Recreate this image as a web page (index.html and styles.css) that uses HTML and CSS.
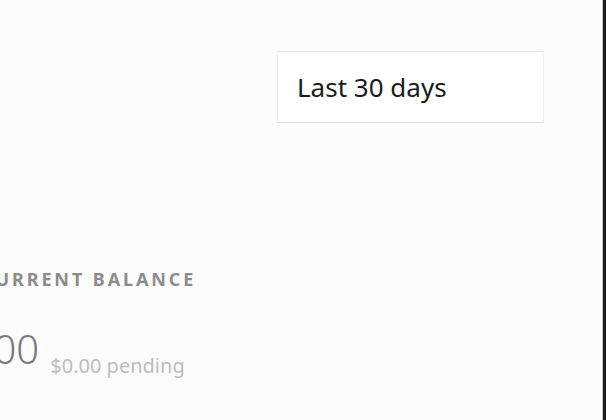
FILE: index.html
```html
<!DOCTYPE html>
<html lang="en">
<head>
<meta charset="utf-8">
<title>Balance</title>
<link rel="stylesheet" href="styles.css">
</head>
<body>
<div class="frame">
  <main class="main">
    <div class="toolbar">
      <div class="select">Last 30 days</div>
    </div>
    <section class="balance">
      <div class="label">CURRENT BALANCE</div>
      <div class="amount-row">
        <span class="amount">$0.00</span>
        <span class="pending">$0.00 pending</span>
      </div>
    </section>
  </main>
  <div class="edge"></div>
</div>
</body>
</html>
```
FILE: styles.css
```css
html, body {
  margin: 0;
  padding: 0;
  height: 100%;
  overflow: hidden;
}
body {
  background: #fcfcfc;
  font-family: "Noto Sans", "Open Sans", sans-serif;
}
.frame {
  display: flex;
  height: 420px;
}
.main {
  flex: 1;
  padding-top: 51px;
  overflow: hidden;
}
.edge {
  width: 3px;
  background: #1e1e1e;
  border-left: 1px solid #c4c4c4;
}
.toolbar {
  display: flex;
  justify-content: flex-end;
  padding-right: 58px;
}
.select {
  box-sizing: border-box;
  width: 267px;
  height: 72px;
  background: #fff;
  border: 1px solid #f0f0f0;
  border-top-color: #e4e4e4;
  border-bottom-color: #e0e0e0;
  display: flex;
  align-items: center;
  padding-left: 19px;
  font-size: 26px;
  color: #1b1b1b;
}
.balance {
  margin-top: 144px;
  margin-left: -19px;
}
.label {
  font-size: 18px;
  font-weight: 700;
  letter-spacing: 2.9px;
  color: #8c8c8c;
}
.amount-row {
  margin-top: 38px;
  margin-left: -43px;
  white-space: nowrap;
  line-height: 1;
}
.amount {
  font-size: 40px;
  font-weight: 300;
  color: #7a7a7a;
  margin-right: 7px;
}
.pending {
  font-size: 20px;
  color: #bdbdbd;
  vertical-align: -9px;
}
```
